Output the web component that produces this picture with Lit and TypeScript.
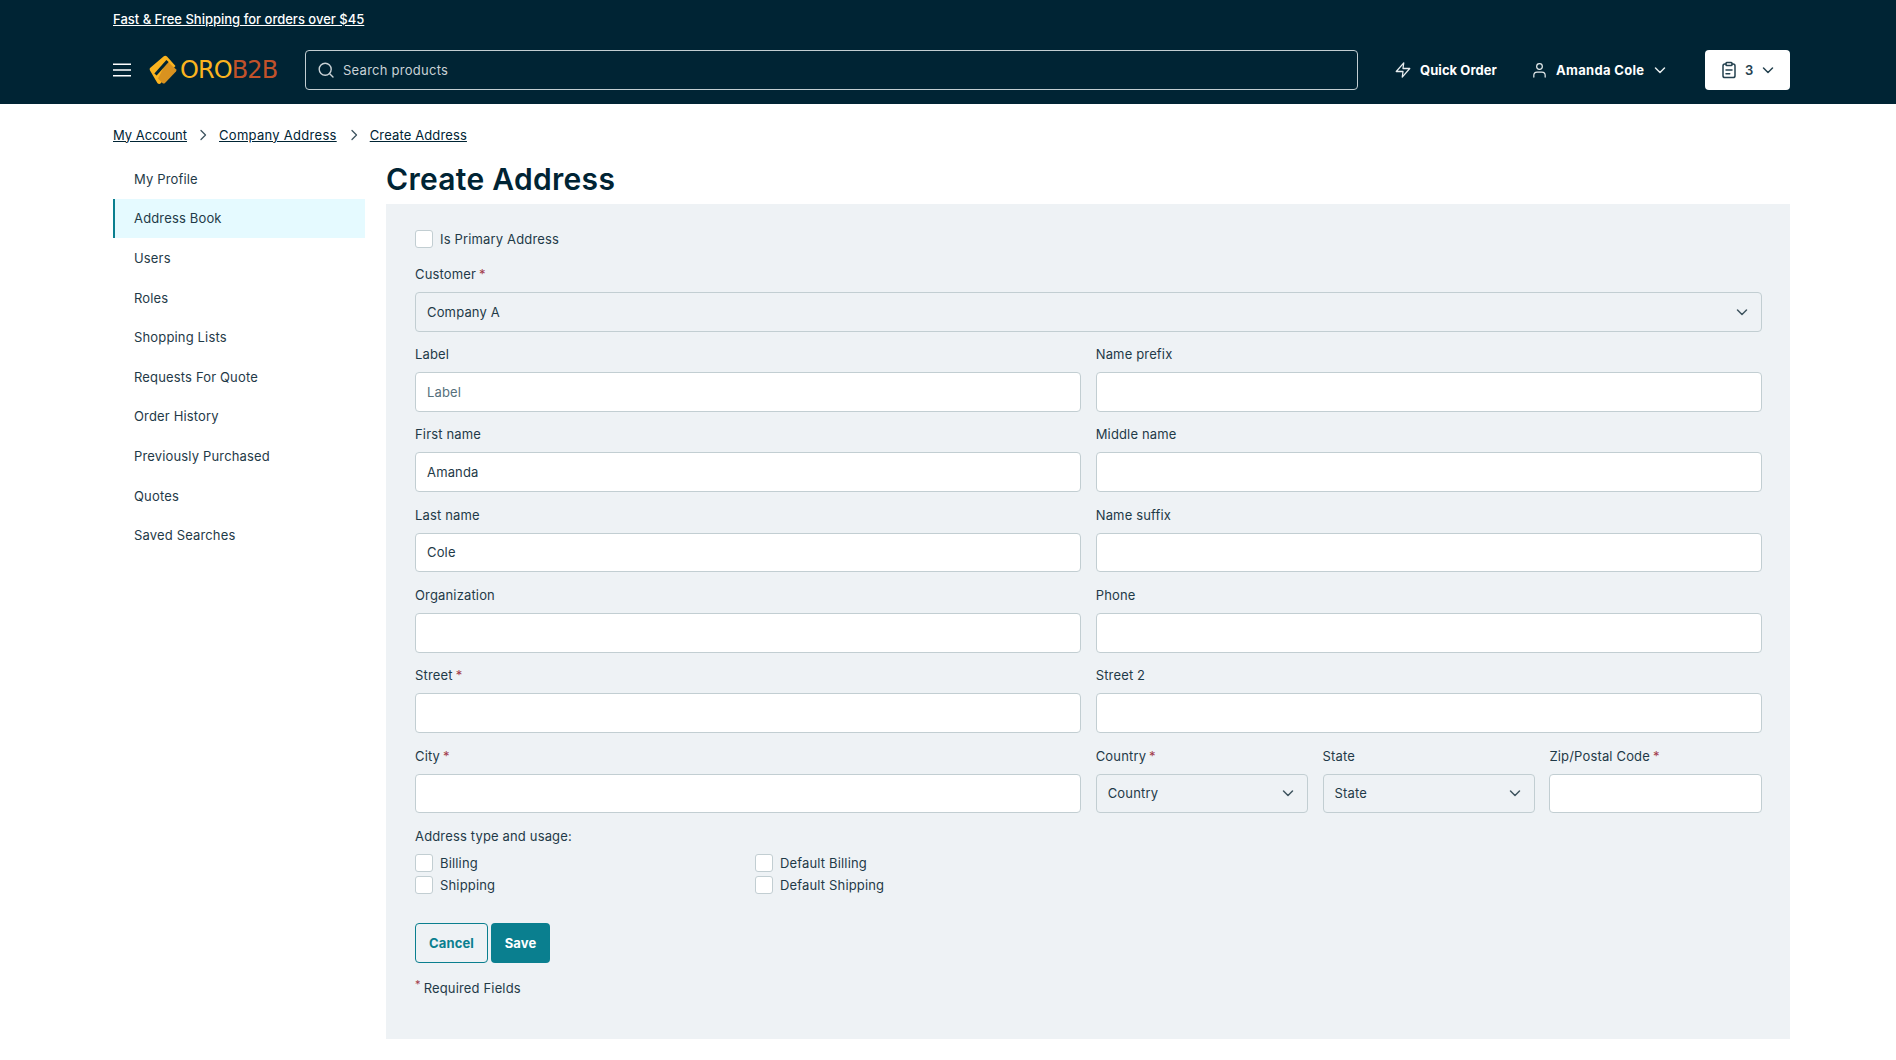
import { LitElement, html, css, svg } from "lit";
import { customElement } from "lit/decorators.js";

const chevron = html`<svg class="chev" width="16" height="16" viewBox="0 0 16 16" fill="none" stroke="currentColor" stroke-width="1.5" stroke-linecap="round" stroke-linejoin="round"><path d="M3.5 6l4.500 4.500L12.500 6"/></svg>`;
const sep = html`<svg width="16" height="16" viewBox="0 0 16 16" fill="none" stroke="#3f5560" stroke-width="1.3" stroke-linecap="round" stroke-linejoin="round"><path d="M6 3.500L10.500 8 6 12.500"/></svg>`;

const sideItems = ["My Profile","Address Book","Users","Roles","Shopping Lists","Requests For Quote","Order History","Previously Purchased","Quotes","Saved Searches"];

@customElement("app-root")
export class AppRoot extends LitElement {
  static styles = css`
    :host { display: block; min-height: 1060px; background: #fff; color: #002434; font-family: Inter, "Open Sans", sans-serif; font-size: 13px; }
    * { box-sizing: border-box; }
    .top { background: #002434; height: 104px; color: #fff; padding: 0 106px 0 113px; }
    .promo { height: 37px; display: flex; align-items: center; font-size: 13px; font-weight: 500; text-decoration: underline; letter-spacing: 0; }
    .bar { display: flex; align-items: center; height: 41px; margin-top: 12px; }
    .burger { width: 20px; margin-right: 15px; display: flex; }
    .logo { display: flex; align-items: center; width: 157px; }
    .logo-text { font-family: "DejaVu Sans", sans-serif; font-weight: 400; font-size: 24px; letter-spacing: -.9px; margin-left: 2px; line-height: 1; }
    .y { color: #fbb41f; } .o { color: #c2522a; }
    .search { width: 1053px; height: 40px; border: 1px solid #c2ced2; border-radius: 4px; display: flex; align-items: center; padding-left: 11px; gap: 8px; color: #c9d2d6; font-size: 13px; letter-spacing: .02em; }
    .nav { display: flex; align-items: center; font-weight: 700; font-size: 13px; letter-spacing: .005em; flex: 1; }
    .qo { margin-left: 36px; display: flex; align-items: center; gap: 8px; }
    .user { margin-left: 34px; display: flex; align-items: center; gap: 8px; letter-spacing: .025em; }
    .user .chev { color: #e6ecee; }
    .cart { margin-left: auto; width: 85px; height: 40px; background: #fff; border-radius: 4px; color: #24414f; display: flex; align-items: center; padding-left: 15px; gap: 7px; font-weight: 600; }
    .crumbs { display: flex; align-items: center; padding: 10px 113px 0; height: 51px; letter-spacing: .01em; }
    .crumbs a { text-decoration: underline; color: #002434; }
    .crumbs a:nth-of-type(1) { letter-spacing: 0; }
    .crumbs a:nth-of-type(2) { letter-spacing: .022em; }
    .crumbs svg { margin: 0 8px 0 8px; }
    .crumbs svg:nth-of-type(2) { margin: 0 8px 0 9px; }
    .main { display: flex; padding: 0 106px 0 113px; }
    .side { width: 252px; margin-right: 21px; flex: none; padding-top: 4px; }
    .side div { height: 39.6px; padding-left: 21px; display: flex; align-items: center; color: #1f3a48; letter-spacing: .012em; }
    .side .active { background: #e5faff; border-left: 2px solid #0a7f8f; padding-left: 19px; height: 39px; margin-bottom: .6px; }
    .content { flex: 1; min-width: 0; }
    h1 { margin: 0; height: 49px; font-size: 30px; line-height: 48px; font-weight: 600; color: #002434; letter-spacing: .01em; }
    .panel { background: #eef2f5; height: 835px; padding: 25px 28px 0 29px; }
    .check { display: flex; align-items: center; gap: 7px; height: 22px; color: #1f3a48; letter-spacing: .012em; }
    .box { width: 18px; height: 18px; background: #fff; border: 1px solid #c2ced2; border-radius: 3px; flex: none; }
    .primary { margin-bottom: 17px; height: 20px; }
    .field { display: flex; flex-direction: column; min-width: 0; }
    label { height: 17px; line-height: 17px; margin-bottom: 9px; color: #1f3a48; letter-spacing: .012em; display: block; }
    .req { color: #a13a4a; margin-left: 3px; }
    .control { height: 39.6px; border: 1px solid #c2ced2; border-radius: 4px; background: #fff; padding: 0 11px; display: flex; align-items: center; justify-content: space-between; color: #1f3a48; letter-spacing: .012em; }
    .control.sel { background: #eef2f5; }
    .control.ph { color: #56707c; }
    .control .chev { color: #3f5560; }
    .rows { display: grid; gap: 14.730px 14.400px; grid-template-columns: 1fr 1fr; margin-top: 14.400px; }
    .triple { display: grid; grid-template-columns: 1fr 1fr 1fr; gap: 14.400px; }
    .usage { margin-top: 14.400px; }
    .usage label { margin-bottom: 7px; }
    .checks { display: grid; grid-template-columns: 340px 1fr; row-gap: 0; }
    .checks .check { height: 22px; }
    .btns { display: flex; gap: 3px; margin-top: 27px; }
    .btn { height: 40px; border-radius: 4px; display: flex; align-items: center; justify-content: center; font-weight: 700; letter-spacing: .01em; }
    .cancel { width: 73px; border: 1px solid #0a7f8f; color: #0a7f8f; }
    .save { width: 59px; background: #0a7f8f; color: #fff; }
    .note { margin-top: 15px; color: #1f3a48; letter-spacing: .012em; display: flex; gap: 3px; height: 20px; align-items: center; }
    .note span { color: #a13a4a; font-size: 11px; transform: translateY(-4px); }
  `;

  private field(name: string, value = "", opts: { req?: boolean; sel?: boolean; ph?: boolean } = {}) {
    return html`<div class="field">
      <label>${name}${opts.req ? html`<span class="req">*</span>` : ""}</label>
      <div class="control ${opts.sel ? "sel" : ""} ${opts.ph ? "ph" : ""}"><span>${value}</span>${opts.sel ? chevron : ""}</div>
    </div>`;
  }

  render() {
    return html`
      <div class="top">
        <div class="promo">Fast &amp; Free Shipping for orders over $45</div>
        <div class="bar">
          <div class="burger"><svg width="18" height="14" viewBox="0 0 18 14" stroke="#fff" stroke-width="1.6"><path d="M0 1.200h18M0 7h18M0 12.800h18"/></svg></div>
          <div class="logo">
            <svg width="30" height="30" viewBox="0 0 30 30">${svg`
              <path d="M15.500 1.500a2.500 2.500 0 0 1 3.500 0L27.500 11 13 28a2.500 2.500 0 0 1-3.500.2L2 15.500a2.500 2.500 0 0 1 0-2.400z" fill="#fbb41f"/>
              <path d="M19 6L28 14.200a1.600 1.600 0 0 1 0 2.200L17 28a2 2 0 0 1-2.600 0L10 23.600z" fill="#d9921f"/>
              <path d="M7.500 19.500L19.500 6" stroke="#002434" stroke-width="3" fill="none"/>`}
            </svg>
            <span class="logo-text"><span class="y">ORO</span><span class="o">B2B</span></span>
          </div>
          <div class="search">
            <svg width="18" height="18" viewBox="0 0 18 18" fill="none" stroke="#c9d2d6" stroke-width="1.4" stroke-linecap="round"><circle cx="8.200" cy="8.200" r="6"/><path d="M12.700 12.700L16 16"/></svg>
            Search products
          </div>
          <div class="nav">
            <div class="qo"><svg width="18" height="18" viewBox="0 0 24 24" fill="none" stroke="#e6ecee" stroke-width="1.7" stroke-linejoin="round" stroke-linecap="round"><path d="M13 2.500L3 14h9l-1 7.500L21 10h-9z"/></svg>Quick Order</div>
            <div class="user"><svg width="17" height="18" viewBox="0 0 24 24" fill="none" stroke="#e6ecee" stroke-width="1.7" stroke-linecap="round"><path d="M4 22v-2.500A4.500 4.500 0 0 1 8.500 15h7a4.500 4.500 0 0 1 4.500 4.500V22"/><circle cx="12" cy="7" r="4"/></svg>Amanda Cole${chevron}</div>
            <div class="cart"><svg width="18" height="18" viewBox="0 0 24 24" fill="none" stroke="#24414f" stroke-width="2" stroke-linecap="round" stroke-linejoin="round"><path d="M16 4h1.500A2.500 2.500 0 0 1 20 6.500V19.500A2.500 2.500 0 0 1 17.500 22h-11A2.500 2.500 0 0 1 4 19.500V6.500A2.500 2.500 0 0 1 6.500 4H8"/><rect x="8" y="2" width="8" height="4" rx="1"/><path d="M8 12h8M8 17h5"/></svg>3${chevron}</div>
          </div>
        </div>
      </div>
      <div class="crumbs"><a>My Account</a>${sep}<a>Company Address</a>${sep}<a>Create Address</a></div>
      <div class="main">
        <div class="side">
          ${sideItems.map((s) => html`<div class="${s === "Address Book" ? "active" : ""}">${s}</div>`)}
        </div>
        <div class="content">
          <h1>Create Address</h1>
          <div class="panel">
            <div class="check primary"><span class="box"></span>Is Primary Address</div>
            ${this.field("Customer", "Company A", { req: true, sel: true })}
            <div class="rows">
              ${this.field("Label", "Label", { ph: true })}
              ${this.field("Name prefix")}
              ${this.field("First name", "Amanda")}
              ${this.field("Middle name")}
              ${this.field("Last name", "Cole")}
              ${this.field("Name suffix")}
              ${this.field("Organization")}
              ${this.field("Phone")}
              ${this.field("Street", "", { req: true })}
              ${this.field("Street 2")}
              ${this.field("City", "", { req: true })}
              <div class="triple">
                ${this.field("Country", "Country", { req: true, sel: true })}
                ${this.field("State", "State", { sel: true })}
                ${this.field("Zip/Postal Code", "", { req: true })}
              </div>
            </div>
            <div class="usage">
              <label>Address type and usage:</label>
              <div class="checks">
                <div class="check"><span class="box"></span>Billing</div>
                <div class="check"><span class="box"></span>Default Billing</div>
                <div class="check"><span class="box"></span>Shipping</div>
                <div class="check"><span class="box"></span>Default Shipping</div>
              </div>
            </div>
            <div class="btns"><div class="btn cancel">Cancel</div><div class="btn save">Save</div></div>
            <div class="note"><span>*</span>Required Fields</div>
          </div>
        </div>
      </div>
    `;
  }
}
